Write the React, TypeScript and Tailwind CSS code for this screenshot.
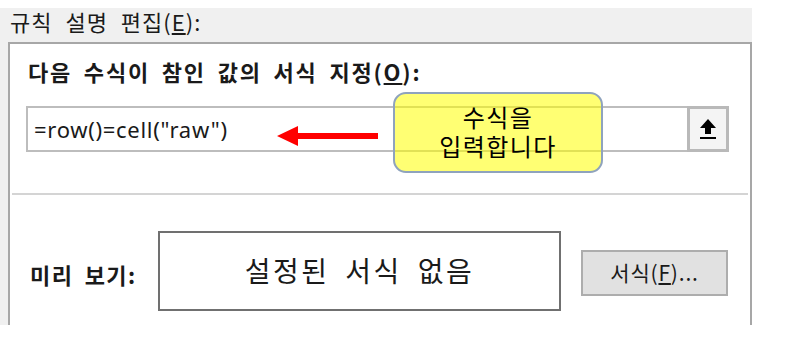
import React from "react";

const ko = { fontFamily: '"Noto Sans CJK KR", "Noto Sans", sans-serif' };

function UploadIcon() {
  return (
    <svg width="18" height="22" viewBox="0 0 18 22">
      <polygon points="9,1 1,10 6,10 6,16 12,16 12,10 17,10" fill="#000" />
      <rect x="1" y="19" width="16" height="2" fill="#000" />
    </svg>
  );
}

function RedArrow() {
  return (
    <svg width="102" height="22" viewBox="0 0 102 22">
      <polygon points="0,11 21,1 21,8 101,8 101,14 21,14 21,21" fill="#ff0000" />
    </svg>
  );
}

export default function App() {
  return (
    <div className="w-[788px] h-[346px] bg-white overflow-hidden text-[#1a1a1a]" style={ko}>
      <div className="w-[752px] h-[318px] mt-[7px] bg-[#f0f0f0] border-t border-white flex flex-col">
        <div className="h-[34px] pl-[10px] flex items-center text-[22px] leading-none pb-[8px] tracking-[1px] [word-spacing:7px]">
          규칙 설명 편집(<span className="underline">E</span>):
        </div>
        <div className="relative ml-[8px] flex-1 bg-white border-l-2 border-t-2 border-r-2 border-[#a7a7a7] flex flex-col">
          <div className="pl-[18px] mt-[12px] text-[22px] font-bold leading-[30px] tracking-[1.8px] [word-spacing:5px]">
            다음 수식이 참인 값의 서식 지정(<span className="underline">O</span>):
          </div>
          <div className="ml-[16px] mt-[20px] w-[703px] h-[46px] border-2 border-[#bdbdbd] flex items-stretch">
            <div className="flex-1 flex items-center pl-[6px] text-[22px] tracking-[0.7px]" style={{ fontFamily: '"Noto Sans", "Noto Sans CJK KR", sans-serif' }}>
              =row()=cell("raw")
            </div>
            <div className="w-[42px] border-[3px] border-[#b9b9b9] bg-[#f4f4f4] flex items-center justify-center -my-[2px] -mr-[2px]">
              <UploadIcon />
            </div>
          </div>
          <div className="mt-[41px] mx-[2px] h-[2px] bg-[#d4d4d4]" />
          <div className="flex items-center mt-[36px]">
            <div className="pl-[20px] w-[148px] text-[22px] font-bold pt-[6px] tracking-[1.4px] [word-spacing:5px]">미리 보기:</div>
            <div className="w-[403px] h-[80px] border-2 border-[#707070] flex items-center justify-center text-[28px] pb-[2px] tracking-[2.5px] [word-spacing:7px]">
              설정된 서식 없음
            </div>
            <div className="ml-[20px] mt-[4px] w-[147px] h-[46px] border-2 border-[#adadad] bg-[#e1e1e1] flex items-center justify-center text-[21px] tracking-[0.8px]">
              서식(<span className="underline">F</span>)...
            </div>
          </div>
          <div className="absolute left-[267px] top-[81px]">
            <RedArrow />
          </div>
          <div
            className="absolute left-[383px] top-[48px] w-[210px] h-[81px] rounded-[13px] border-2 border-[#8fa3bd] bg-[#ffff00]/55 flex flex-col items-center justify-center text-[24px] leading-[29px] text-black tracking-[1.4px]"
            style={{ fontFamily: '"Liberation Sans", "Noto Sans CJK KR", sans-serif' }}
          >
            <div>수식을</div>
            <div>입력합니다</div>
          </div>
        </div>
      </div>
    </div>
  );
}
